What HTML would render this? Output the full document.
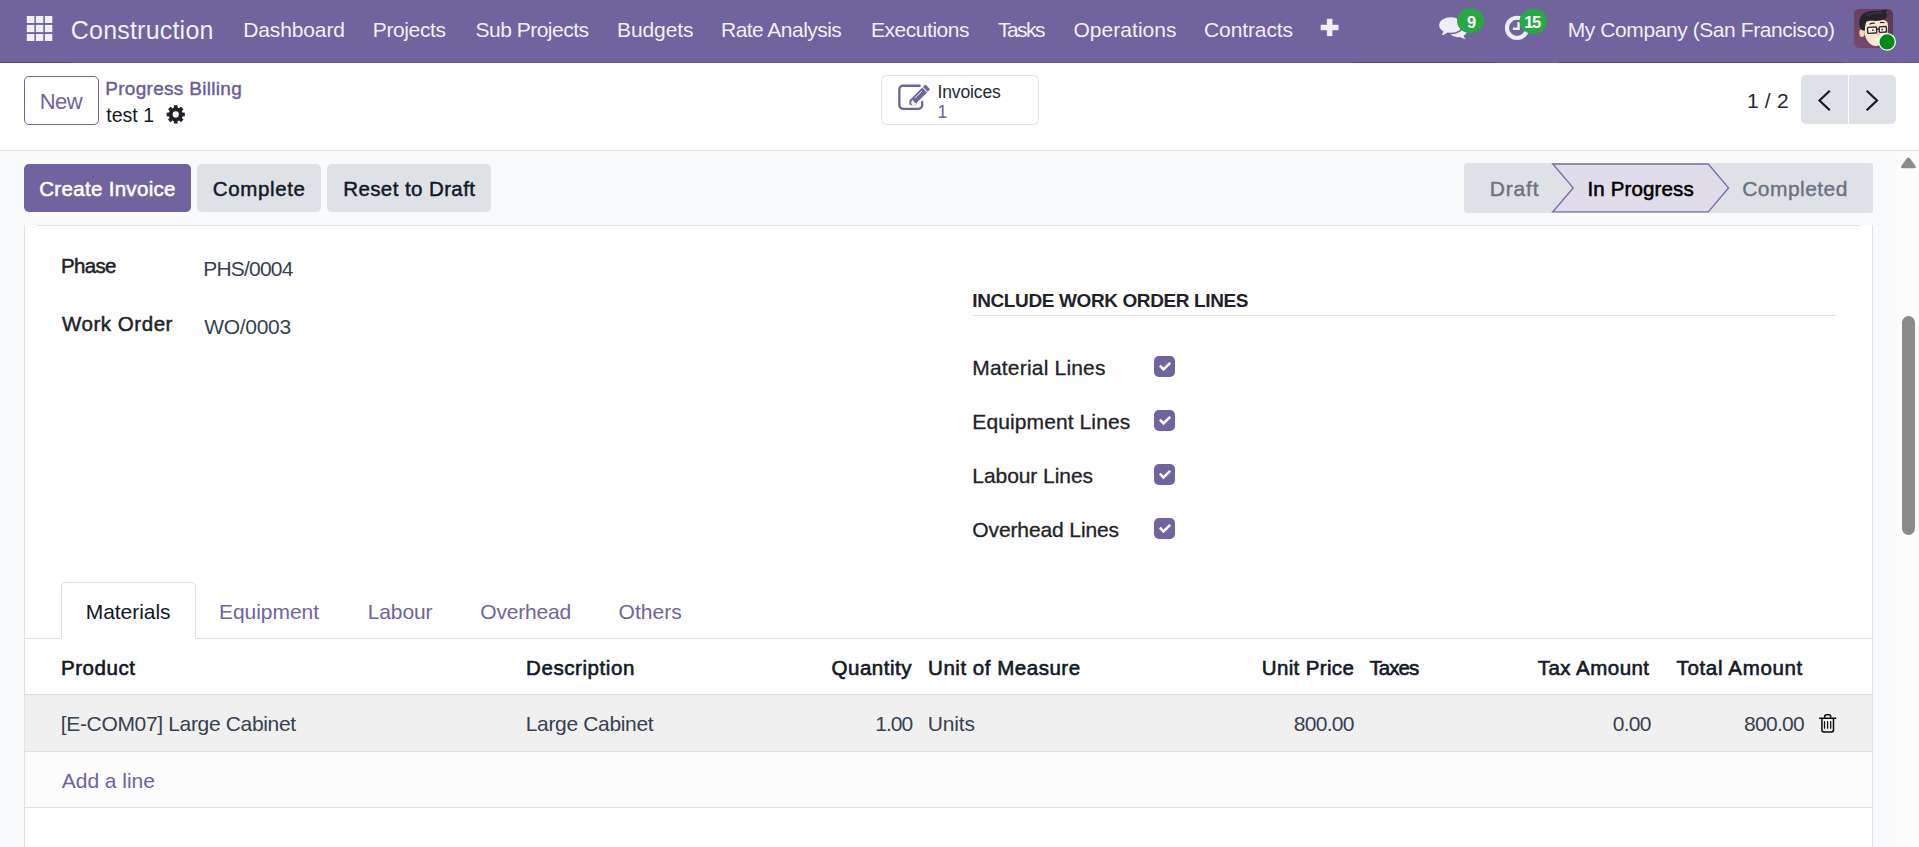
<!DOCTYPE html>
<html><head><meta charset="utf-8"><title>Odoo - Progress Billing</title>
<style>
html,body{margin:0;padding:0;}
body{width:1919px;height:847px;overflow:hidden;position:relative;background:#f9fafb;font-family:"Liberation Sans",sans-serif;}
.a{position:absolute;box-sizing:border-box;}
.t{position:absolute;white-space:nowrap;font-family:"Liberation Sans",sans-serif;}
svg{position:absolute;left:0;top:0;overflow:visible;}
</style></head><body>
<!-- navbar -->
<div class="a" style="left:0;top:0;width:1919px;height:62px;background:#71639e;"></div>
<div class="a" style="left:0;top:62px;width:1919px;height:1px;background:#685a99;"></div>
<div class="a" style="left:0;top:62px;width:71px;height:1px;background:#564781;"></div>
<div class="a" style="left:1352px;top:62px;width:144px;height:1px;background:#564781;"></div>
<div class="a" style="left:1558px;top:62px;width:286px;height:1px;background:#564781;"></div>
<!-- control panel -->
<div class="a" style="left:0;top:63px;width:1919px;height:87px;background:#fff;"></div>
<div class="a" style="left:0;top:150px;width:1919px;height:1px;background:#dfe2e7;"></div>
<!-- scrollbar -->
<div class="a" style="left:1897px;top:151px;width:22px;height:696px;background:#fcfcfc;"></div>
<div class="a" style="left:1902px;top:316px;width:13px;height:219px;border-radius:6.5px;background:#8b8b8b;"></div>
<!-- New button -->
<div class="a" style="left:24px;top:76px;width:75px;height:49px;border:1px solid #71639e;border-radius:5px;background:#fff;"></div>
<!-- Invoices stat button -->
<div class="a" style="left:881px;top:75px;width:158px;height:50px;border:1px solid #dee2e6;border-radius:6px;background:#fff;"></div>
<!-- pager -->
<div class="a" style="left:1801px;top:75px;width:47px;height:49px;background:#dee2e6;border-radius:5px 0 0 5px;"></div>
<div class="a" style="left:1849px;top:75px;width:47px;height:49px;background:#dee2e6;border-radius:0 5px 5px 0;"></div>
<!-- statusbar buttons -->
<div class="a" style="left:24px;top:164px;width:167px;height:48px;background:#71639e;border-radius:5px;"></div>
<div class="a" style="left:197px;top:164px;width:124px;height:48px;background:#dee2e6;border-radius:5px;"></div>
<div class="a" style="left:327px;top:164px;width:164px;height:48px;background:#dee2e6;border-radius:5px;"></div>
<!-- statusbar widget -->
<div class="a" style="left:1464px;top:163px;width:409px;height:50px;background:#dee2e6;border-radius:3px;"></div>
<!-- sheet -->
<div class="a" style="left:24px;top:225px;width:1849px;height:640px;background:#fff;border-left:1px solid #dee2e6;border-right:1px solid #dee2e6;"></div>
<div class="a" style="left:37px;top:225px;width:1824px;height:1px;background:#e6e6e6;"></div>
<!-- group separator -->
<div class="a" style="left:973px;top:315px;width:863px;height:1px;background:#e3e3e3;"></div>
<!-- checkboxes -->
<div class="a" style="left:1154px;top:356px;width:21px;height:21px;background:#71639e;border-radius:5px;"></div>
<div class="a" style="left:1154px;top:410px;width:21px;height:21px;background:#71639e;border-radius:5px;"></div>
<div class="a" style="left:1154px;top:464px;width:21px;height:21px;background:#71639e;border-radius:5px;"></div>
<div class="a" style="left:1154px;top:518px;width:21px;height:21px;background:#71639e;border-radius:5px;"></div>
<!-- tabs -->
<div class="a" style="left:25px;top:638px;width:1847px;height:1px;background:#dee2e6;"></div>
<div class="a" style="left:61px;top:582px;width:135px;height:57px;background:#fff;border:1px solid #dee2e6;border-bottom:none;border-radius:5px 5px 0 0;"></div>
<!-- table -->
<div class="a" style="left:25px;top:694px;width:1847px;height:1px;background:#d8dde3;"></div>
<div class="a" style="left:25px;top:695px;width:1847px;height:56px;background:#f0f0f0;"></div>
<div class="a" style="left:25px;top:751px;width:1847px;height:1px;background:#dee2e6;"></div>
<div class="a" style="left:25px;top:752px;width:1847px;height:55px;background:#fcfcfc;"></div>
<div class="a" style="left:25px;top:807px;width:1847px;height:1px;background:#dee2e6;"></div>

<svg width="1919" height="847" viewBox="0 0 1919 847">
<!-- apps grid -->
<g fill="#f1eff6"><rect x="26.8" y="16" width="7.6" height="7.0"/><rect x="35.9" y="16" width="7.4" height="7.0"/><rect x="44.9" y="16" width="7.4" height="7.0"/><rect x="26.8" y="24.9" width="7.6" height="7.2"/><rect x="35.9" y="24.9" width="7.4" height="7.2"/><rect x="44.9" y="24.9" width="7.4" height="7.2"/><rect x="26.8" y="34" width="7.6" height="7.0"/><rect x="35.9" y="34" width="7.4" height="7.0"/><rect x="44.9" y="34" width="7.4" height="7.0"/></g>
<!-- plus -->
<path d="M1327.1 18.9h5.1v6h6.1v5.1h-6.1v5.9h-5.1v-5.9h-6.2v-5.1h6.2z" fill="#f1eff6" stroke="#f1eff6" stroke-width=".4" stroke-linejoin="round"/>
<!-- chat icon -->
<g fill="#efedf4">
<path d="M1458.1 24.1c5 0 9 2.900 9 6.500 0 2.100-1.400 4-3.600 5.200.4 1.100 1.200 2.200 2.300 3.100-2.200-.1-4.200-.8-5.600-1.900-.7.1-1.400.2-2.100.2-5 0-9-2.900-9-6.600s4-6.500 9-6.500z"/>
<path d="M1450.8 16.500C1457.700 16.500 1463.200 20.300 1463.200 25S1457.700 33.500 1450.800 33.500C1449.700 33.500 1448.700 33.400 1447.700 33.200C1445.700 34.900 1442.700 36.100 1439.300 36.400C1440.900 35.100 1442.100 33.500 1442.600 31.800C1440.100 30.200 1438.400 27.800 1438.400 25C1438.400 20.300 1443.900 16.500 1450.800 16.500Z" stroke="#71639e" stroke-width="1.500"/>
</g>
<!-- clock icon -->
<circle cx="1517.05" cy="27.9" r="10.1" fill="none" stroke="#efedf4" stroke-width="4.100"/>
<path d="M1517.3 21.900h2.500v8.100h-6.950v-2.450h4.450z" fill="#efedf4"/>
<!-- badges -->
<rect x="1457" y="8.600" width="27" height="24.300" rx="12.150" fill="#28a745"/>
<rect x="1519.500" y="8.700" width="27.500" height="25" rx="12.500" fill="#28a745"/>
<!-- avatar -->
<defs>
<linearGradient id="avbg" x1="0" y1="1" x2="1" y2="0"><stop offset="0" stop-color="#7a4a6e"/><stop offset="1" stop-color="#5b3652"/></linearGradient>
<clipPath id="avclip"><rect x="1854" y="9" width="39" height="39" rx="5"/></clipPath>
</defs>
<g clip-path="url(#avclip)">
<rect x="1854" y="9" width="39" height="39" fill="url(#avbg)"/>
<ellipse cx="1862" cy="33" rx="2.700" ry="4" fill="#f3d4bb"/>
<path d="M1864 24c1-3 6-4.500 12-4.500 6 0 10 .5 11.500 3 .8 3 .6 9-.5 13-1.500 5.500-6 10.500-11 10.500-4 0-8-3-10-7.500-1.500-3.500-2-9-2-14.500z" fill="#fbe5d2"/>
<path d="M1886.500 30c.5 4-.5 9-3 12.500" stroke="#f0ccb0" stroke-width="1.500" fill="none"/>
<path d="M1864.800 30.800c-1.700-.2-3.500-.8-4.500-2.300-1.500-4.500-1.500-9 1-12.500 2.500-3.500 7.500-5.200 13-5 4.500.2 8.500-1 12.800-1.300-1.200 1.300-1.500 2.500-.6 3.500 1.300 2 .8 4-1.500 5.500-3 1.800-6.500 2.300-10 2.200-3.500-.2-6.500-.2-8.500.6-1 1.800-1.500 5.500-1.700 9.300z" fill="#232329"/>
<path d="M1866 15.500q8-4 17-2.500" stroke="#4a4a52" stroke-width="1.200" fill="none" opacity=".6"/>
<rect x="1867.600" y="27.200" width="9" height="6" rx=".8" fill="#fdf1e6" stroke="#2a2a30" stroke-width="1.400" transform="rotate(-3 1872 30)"/>
<rect x="1879.200" y="26.700" width="7.200" height="5.500" rx=".8" fill="#fdf1e6" stroke="#2a2a30" stroke-width="1.400" transform="rotate(-3 1883 29.500)"/>
<path d="M1876.600 29.300l2.600-.3" stroke="#2a2a30" stroke-width="1.300"/>
<circle cx="1872.800" cy="30.200" r=".9" fill="#3a3a40"/><circle cx="1882.200" cy="29.500" r=".9" fill="#3a3a40"/>
<path d="M1869.500 24.300q2.500-1.500 5.500-1M1880 22.800q2-.8 4.500 0" stroke="#232329" stroke-width="1.100" fill="none"/>
<path d="M1873 38.400q3 1.700 6-.2" stroke="#fff" stroke-width="1.500" fill="none"/>
<path d="M1877 34.500q1.500 .8 3 0" stroke="#e9b9a0" stroke-width="1" fill="none"/>
</g>
<circle cx="1887.100" cy="41.800" r="8.250" fill="#008a17" stroke="#fff" stroke-width="1.300"/>
<!-- gear -->
<path d="M182.12 111.81 L182.47 112.50 L184.87 112.64 L184.87 116.26 L182.47 116.40 L182.12 117.09 L181.88 117.82 L183.48 119.62 L180.92 122.18 L179.12 120.58 L178.39 120.82 L177.70 121.17 L177.56 123.57 L173.94 123.57 L173.80 121.17 L173.11 120.82 L172.38 120.58 L170.58 122.18 L168.02 119.62 L169.62 117.82 L169.38 117.09 L169.03 116.40 L166.63 116.26 L166.63 112.64 L169.03 112.50 L169.38 111.81 L169.62 111.08 L168.02 109.28 L170.58 106.72 L172.38 108.32 L173.11 108.08 L173.80 107.73 L173.94 105.33 L177.56 105.33 L177.70 107.73 L178.39 108.08 L179.12 108.32 L180.92 106.72 L183.48 109.28 L181.88 111.08Z M178.85 114.45 A3.1 3.1 0 1 0 172.65 114.45 A3.1 3.1 0 1 0 178.85 114.45Z" fill="#1f2329" fill-rule="evenodd"/>
<!-- pencil-square icon -->
<path d="M919.600 85.700H902.850a3.500 3.500 0 0 0-3.500 3.500V105.300a3.500 3.500 0 0 0 3.500 3.500H918.700a3.500 3.500 0 0 0 3.500-3.500V102" fill="none" stroke="#71639e" stroke-width="2.350" stroke-linecap="round"/>
<path d="M909.400 100.500L922.300 87.600 927.100 92.400 914.750 104.750H909.400Z" fill="#71639e"/>
<path d="M922.950 86.950l1.700-1.700a1.100 1.100 0 0 1 1.550 0l3.250 3.250a1.100 1.100 0 0 1 0 1.550l-1.700 1.700z" fill="#71639e"/>
<path d="M914.800 98.100l7-7" stroke="#fff" stroke-width=".9"/>
<path d="M911.100 101.300l1.700-1.700 1.300 1.300h1.300v1.300l1.300 1.300-1.700 1.700h-3.900z" fill="#71639e"/>
<path d="M911.300 103.700v-2.200l1.400-1.400 1.100 1.100v1.200h1.200l1.100 1.100-1.400 1.400h-2.200z" fill="#fff" opacity=".95"/>
<!-- pager chevrons -->
<g fill="none" stroke="#111827" stroke-width="2.200" stroke-linecap="square">
<path d="M1829 91.500l-9.500 9 9.500 9"/>
<path d="M1867.500 91.500l9.500 9-9.500 9"/>
</g>
<!-- statusbar active arrow -->
<path d="M1552.800 164H1708.300L1728.500 187.900 1708.300 211.900H1552.800L1573.200 187.900Z" fill="#e0dcea" stroke="#7a6ca6" stroke-width="1.400" stroke-linejoin="miter"/>
<!-- scroll up arrow -->
<path d="M1908.400 157.500q1.100 0 1.700.9l5.400 7.600q.9 2.200-1.200 2.300h-11.800q-2.100-.1-1.200-2.300l5.400-7.600q.6-.9 1.700-.9z" fill="#8b8b8b"/>
<!-- checkmarks -->
<g fill="none" stroke="#fff" stroke-width="2.500" stroke-linecap="butt" stroke-linejoin="miter">
<path d="M1159.900 365.7L1163.500 369.4 1170.200 362.8"/>
<path d="M1159.900 419.7L1163.500 423.4 1170.200 416.8"/>
<path d="M1159.900 473.7L1163.500 477.4 1170.200 470.8"/>
<path d="M1159.900 527.7L1163.500 531.4 1170.200 524.8"/>
</g>
<!-- trash -->
<g fill="none" stroke="#0b0d12" stroke-width="1.500" stroke-linecap="round">
<path d="M1821.900 718.800V730q0 1.900 1.900 1.900h7.800q1.900 0 1.900-1.900V718.800"/>
<path d="M1819.600 718.200H1835.700"/>
<path d="M1824.700 717.700v-1.200q0-1.800 1.800-1.800h2.400q1.800 0 1.800 1.800v1.200" stroke-linecap="butt"/>
<path d="M1824.500 721.600v6.600M1827.600 721.600v6.600M1830.700 721.600v6.600" stroke-width="1.250"/>
</g>
</svg>

<span class="t" style="left:70.75px;top:13.50px;font-size:25px;line-height:33px;color:rgba(255,255,255,.92);letter-spacing:0.210px;">Construction</span>
<span class="t" style="left:243.25px;top:15.50px;font-size:21px;line-height:28px;color:rgba(255,255,255,.92);letter-spacing:-0.132px;">Dashboard</span>
<span class="t" style="left:372.75px;top:15.50px;font-size:21px;line-height:28px;color:rgba(255,255,255,.92);letter-spacing:-0.373px;">Projects</span>
<span class="t" style="left:475.50px;top:15.50px;font-size:21px;line-height:28px;color:rgba(255,255,255,.92);letter-spacing:-0.505px;">Sub Projects</span>
<span class="t" style="left:617.00px;top:15.50px;font-size:21px;line-height:28px;color:rgba(255,255,255,.92);letter-spacing:-0.093px;">Budgets</span>
<span class="t" style="left:721.00px;top:15.50px;font-size:21px;line-height:28px;color:rgba(255,255,255,.92);letter-spacing:-0.532px;">Rate Analysis</span>
<span class="t" style="left:871.00px;top:15.50px;font-size:21px;line-height:28px;color:rgba(255,255,255,.92);letter-spacing:-0.469px;">Executions</span>
<span class="t" style="left:998.00px;top:15.50px;font-size:21px;line-height:28px;color:rgba(255,255,255,.92);letter-spacing:-1.545px;">Tasks</span>
<span class="t" style="left:1073.50px;top:15.50px;font-size:21px;line-height:28px;color:rgba(255,255,255,.92);letter-spacing:0.031px;">Operations</span>
<span class="t" style="left:1204.00px;top:15.50px;font-size:21px;line-height:28px;color:rgba(255,255,255,.92);letter-spacing:-0.108px;">Contracts</span>
<span class="t" style="left:1567.75px;top:15.50px;font-size:21px;line-height:28px;color:rgba(255,255,255,.92);letter-spacing:-0.420px;">My Company (San Francisco)</span>
<span class="t" style="left:39.80px;top:86.90px;font-size:22px;line-height:29px;color:#71639e;letter-spacing:-0.562px;">New</span>
<span class="t" style="left:105.20px;top:75.50px;font-size:19px;line-height:25px;color:#6a5c97;letter-spacing:0.305px;-webkit-text-stroke:0.4px #6a5c97;">Progress Billing</span>
<span class="t" style="left:106.20px;top:101.70px;font-size:19.5px;line-height:26px;color:#111827;letter-spacing:0.050px;">test 1</span>
<span class="t" style="left:937.50px;top:81.10px;font-size:17.5px;line-height:23px;color:#1f2937;letter-spacing:-0.121px;">Invoices</span>
<span class="t" style="left:937.60px;top:100.50px;font-size:17.5px;line-height:23px;color:#71639e;letter-spacing:0.000px;">1</span>
<span class="t" style="left:1746.90px;top:86.50px;font-size:21px;line-height:28px;color:#1f2937;letter-spacing:0.229px;">1 / 2</span>
<span class="t" style="left:39.20px;top:174.80px;font-size:20.5px;line-height:27px;color:#ffffff;letter-spacing:0.317px;-webkit-text-stroke:0.55px #ffffff;">Create Invoice</span>
<span class="t" style="left:212.80px;top:174.80px;font-size:20.5px;line-height:27px;color:#111827;letter-spacing:0.638px;-webkit-text-stroke:0.45px #111827;">Complete</span>
<span class="t" style="left:343.20px;top:174.80px;font-size:20.5px;line-height:27px;color:#111827;letter-spacing:0.410px;-webkit-text-stroke:0.45px #111827;">Reset to Draft</span>
<span class="t" style="left:1489.75px;top:174.50px;font-size:21px;line-height:28px;color:#6b7280;letter-spacing:0.832px;-webkit-text-stroke:0.4px #6b7280;">Draft</span>
<span class="t" style="left:1587.50px;top:174.80px;font-size:20.5px;line-height:27px;color:#000000;letter-spacing:0.143px;-webkit-text-stroke:0.55px #000000;">In Progress</span>
<span class="t" style="left:1742.25px;top:174.50px;font-size:21px;line-height:28px;color:#6b7280;letter-spacing:0.453px;-webkit-text-stroke:0.4px #6b7280;">Completed</span>
<span class="t" style="left:61.00px;top:251.80px;font-size:20.5px;line-height:27px;color:#1f2329;letter-spacing:-0.681px;-webkit-text-stroke:0.5px #1f2329;">Phase</span>
<span class="t" style="left:203.20px;top:254.50px;font-size:21px;line-height:28px;color:#374151;letter-spacing:-0.793px;">PHS/0004</span>
<span class="t" style="left:62.00px;top:309.80px;font-size:20.5px;line-height:27px;color:#1f2329;letter-spacing:0.542px;-webkit-text-stroke:0.5px #1f2329;">Work Order</span>
<span class="t" style="left:204.20px;top:312.50px;font-size:21px;line-height:28px;color:#374151;letter-spacing:-0.288px;">WO/0003</span>
<span class="t" style="left:972.30px;top:287.70px;font-size:19px;line-height:25px;color:#1f2329;letter-spacing:-0.384px;font-weight:700;">INCLUDE WORK ORDER LINES</span>
<span class="t" style="left:972.30px;top:353.50px;font-size:21px;line-height:28px;color:#1f2329;letter-spacing:0.190px;-webkit-text-stroke:0.3px #1f2329;">Material Lines</span>
<span class="t" style="left:972.30px;top:407.50px;font-size:21px;line-height:28px;color:#1f2329;letter-spacing:0.105px;-webkit-text-stroke:0.3px #1f2329;">Equipment Lines</span>
<span class="t" style="left:972.30px;top:461.50px;font-size:21px;line-height:28px;color:#1f2329;letter-spacing:-0.066px;-webkit-text-stroke:0.3px #1f2329;">Labour Lines</span>
<span class="t" style="left:972.30px;top:515.50px;font-size:21px;line-height:28px;color:#1f2329;letter-spacing:-0.112px;-webkit-text-stroke:0.3px #1f2329;">Overhead Lines</span>
<span class="t" style="left:85.75px;top:597.50px;font-size:21px;line-height:28px;color:#111827;letter-spacing:-0.055px;">Materials</span>
<span class="t" style="left:219.00px;top:597.50px;font-size:21px;line-height:28px;color:#71639e;letter-spacing:-0.039px;">Equipment</span>
<span class="t" style="left:367.75px;top:597.50px;font-size:21px;line-height:28px;color:#71639e;letter-spacing:-0.129px;">Labour</span>
<span class="t" style="left:480.25px;top:597.50px;font-size:21px;line-height:28px;color:#71639e;letter-spacing:-0.185px;">Overhead</span>
<span class="t" style="left:618.50px;top:597.50px;font-size:21px;line-height:28px;color:#71639e;letter-spacing:0.046px;">Others</span>
<span class="t" style="left:61.05px;top:653.80px;font-size:20.5px;line-height:27px;color:#111827;letter-spacing:0.533px;-webkit-text-stroke:0.6px #111827;">Product</span>
<span class="t" style="left:526.05px;top:653.80px;font-size:20.5px;line-height:27px;color:#111827;letter-spacing:0.576px;-webkit-text-stroke:0.6px #111827;">Description</span>
<span class="t" style="left:831.55px;top:653.80px;font-size:20.5px;line-height:27px;color:#111827;letter-spacing:0.508px;-webkit-text-stroke:0.6px #111827;">Quantity</span>
<span class="t" style="left:928.05px;top:653.80px;font-size:20.5px;line-height:27px;color:#111827;letter-spacing:0.525px;-webkit-text-stroke:0.6px #111827;">Unit of Measure</span>
<span class="t" style="left:1261.80px;top:653.80px;font-size:20.5px;line-height:27px;color:#111827;letter-spacing:0.355px;-webkit-text-stroke:0.6px #111827;">Unit Price</span>
<span class="t" style="left:1369.50px;top:653.80px;font-size:20.5px;line-height:27px;color:#111827;letter-spacing:-0.926px;-webkit-text-stroke:0.6px #111827;">Taxes</span>
<span class="t" style="left:1537.80px;top:653.80px;font-size:20.5px;line-height:27px;color:#111827;letter-spacing:0.461px;-webkit-text-stroke:0.6px #111827;">Tax Amount</span>
<span class="t" style="left:1676.50px;top:653.80px;font-size:20.5px;line-height:27px;color:#111827;letter-spacing:0.659px;-webkit-text-stroke:0.6px #111827;">Total Amount</span>
<span class="t" style="left:60.75px;top:709.50px;font-size:21px;line-height:28px;color:#374151;letter-spacing:-0.339px;">[E-COM07] Large Cabinet</span>
<span class="t" style="left:525.75px;top:709.50px;font-size:21px;line-height:28px;color:#374151;letter-spacing:-0.341px;">Large Cabinet</span>
<span class="t" style="left:875.25px;top:709.50px;font-size:21px;line-height:28px;color:#374151;letter-spacing:-0.981px;">1.00</span>
<span class="t" style="left:927.75px;top:709.50px;font-size:21px;line-height:28px;color:#374151;letter-spacing:-0.149px;">Units</span>
<span class="t" style="left:1293.75px;top:709.50px;font-size:21px;line-height:28px;color:#374151;letter-spacing:-0.710px;">800.00</span>
<span class="t" style="left:1612.80px;top:709.50px;font-size:21px;line-height:28px;color:#374151;letter-spacing:-0.731px;">0.00</span>
<span class="t" style="left:1744.10px;top:709.50px;font-size:21px;line-height:28px;color:#374151;letter-spacing:-0.730px;">800.00</span>
<span class="t" style="left:61.75px;top:766.50px;font-size:21px;line-height:28px;color:#71639e;letter-spacing:-0.025px;">Add a line</span>
<span class="t" style="left:1466.90px;top:11.00px;font-size:16.5px;line-height:22px;color:#fff;letter-spacing:0.000px;font-weight:700;">9</span>
<span class="t" style="left:1524.20px;top:11.00px;font-size:16.5px;line-height:22px;color:#fff;letter-spacing:-1.477px;font-weight:700;">15</span>
</body></html>
